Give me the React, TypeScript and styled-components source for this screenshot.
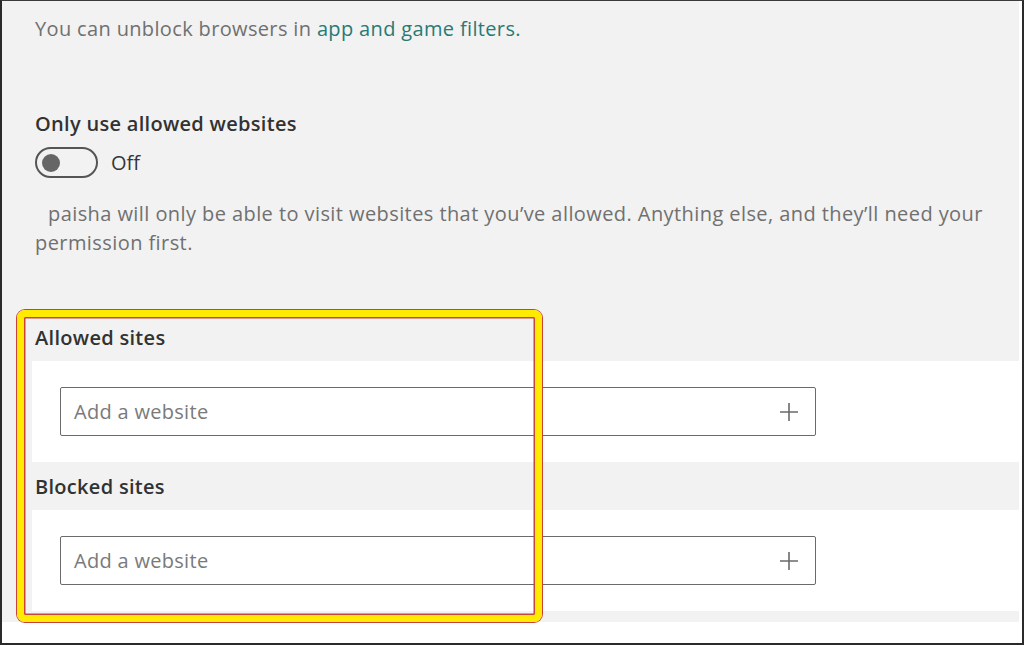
import styled, { createGlobalStyle } from "styled-components";

const GlobalStyle = createGlobalStyle`
    html, body {
        margin: 0;
        padding: 0;
        background: #ffffff;
    }
    * {
        box-sizing: border-box;
    }
`;

const sections = ["Allowed sites", "Blocked sites"];

export default function App() {
    return (
        <>
            <GlobalStyle />
            <Frame>
                <Panel>
                    <Intro>
                        You can unblock browsers in <Link href="#">app and game filters.</Link>
                    </Intro>
                    <Heading>Only use allowed websites</Heading>
                    <ToggleRow>
                        <Toggle>
                            <Knob />
                        </Toggle>
                        <ToggleLabel>Off</ToggleLabel>
                    </ToggleRow>
                    <Description>
                        paisha will only be able to visit websites that you’ve allowed. Anything else, and they’ll need your
                        permission first.
                    </Description>

                    <Sites>
                        {sections.map((title) => (
                            <div key={title}>
                                <SectionHeader>{title}</SectionHeader>
                                <InputBand>
                                    <InputBox>
                                        <Placeholder>Add a website</Placeholder>
                                        <svg width="20" height="20" viewBox="0 0 20 20">
                                            <path d="M10 1v18M1 10h18" stroke="#6a6a6a" strokeWidth="1.6" fill="none" />
                                        </svg>
                                    </InputBox>
                                </InputBand>
                            </div>
                        ))}
                        <BottomStrip />
                    </Sites>
                </Panel>
                <Highlight />
            </Frame>
        </>
    );
}

const Frame = styled.div`
    position: relative;
    width: 1024px;
    height: 645px;
    background: #ffffff;
    border-top: 1px solid #3a3a3a;
    border-left: 2px solid #2a2a2a;
    border-right: 2px solid #2a2a2a;
    border-bottom: 2px solid #2a2a2a;
    font-family: "Open Sans", "Noto Sans", sans-serif;
    overflow: hidden;
`;

const Panel = styled.div`
    background: #f2f2f2;
    margin-right: 3px;
    padding-top: 14px;
    display: flex;
    flex-direction: column;
`;

const Intro = styled.p`
    margin: 0;
    padding-left: 33px;
    font-size: 20px;
    letter-spacing: 0.35px;
    line-height: 28px;
    color: #707070;
`;

const Link = styled.a`
    color: #287a74;
    text-decoration: none;
`;

const Heading = styled.h2`
    margin: 68px 0 0;
    padding-left: 33px;
    font-size: 20px;
    letter-spacing: 0.3px;
    line-height: 26px;
    font-weight: 600;
    color: #323232;
`;

const ToggleRow = styled.div`
    display: flex;
    align-items: center;
    gap: 13px;
    margin-top: 10px;
    padding-left: 33px;
    height: 31px;
`;

const Toggle = styled.div`
    width: 63px;
    height: 31px;
    border: 2px solid #555555;
    border-radius: 16px;
    display: flex;
    align-items: center;
    padding-left: 5px;
`;

const Knob = styled.div`
    width: 18px;
    height: 18px;
    border-radius: 50%;
    background: #666666;
`;

const ToggleLabel = styled.span`
    font-size: 20px;
    color: #363636;
`;

const Description = styled.p`
    margin: 21px 0 0;
    padding-left: 33px;
    padding-right: 20px;
    text-indent: 13px;
    font-size: 20px;
    letter-spacing: 0.42px;
    line-height: 29px;
    color: #707070;
`;

const Sites = styled.div`
    margin-top: 56px;
    display: flex;
    flex-direction: column;
`;

const SectionHeader = styled.div`
    height: 48px;
    display: flex;
    align-items: center;
    padding-left: 33px;
    font-size: 20px;
    letter-spacing: 0.3px;
    font-weight: 600;
    color: #323232;
`;

const InputBand = styled.div`
    margin-left: 30px;
    background: #ffffff;
    height: 101px;
    padding: 26px 0 0 28px;
`;

const InputBox = styled.div`
    width: 756px;
    height: 49px;
    border: 1.5px solid #6a6a6a;
    border-radius: 2px;
    background: #ffffff;
    display: flex;
    align-items: center;
    justify-content: space-between;
    padding: 0 16px 0 13px;
`;

const Placeholder = styled.span`
    font-size: 20px;
    letter-spacing: 0.3px;
    color: #7a7a7a;
`;

const BottomStrip = styled.div`
    height: 11px;
`;

const Highlight = styled.div`
    position: absolute;
    left: 15px;
    top: 309px;
    width: 525px;
    height: 312px;
    border: 7px solid #ffea00;
    border-radius: 8px;
    box-shadow: 0 0 0 1px #c8443a, inset 0 0 0 1.5px #c8443a;
    pointer-events: none;
`;
